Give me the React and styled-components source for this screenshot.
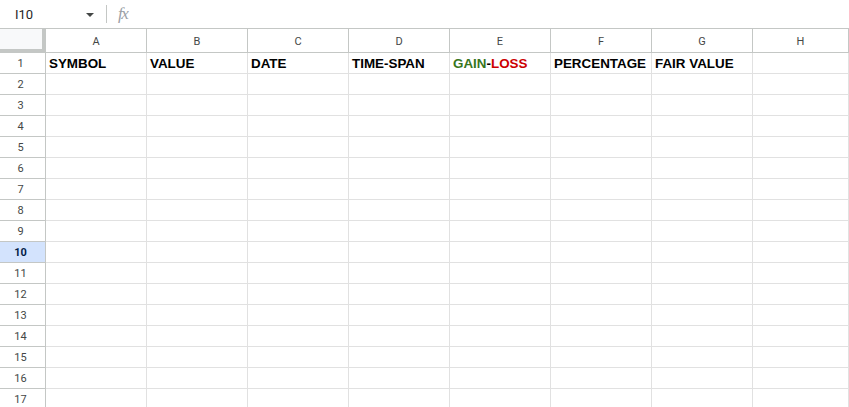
import React from 'react';
import styled, { createGlobalStyle } from "styled-components"

const Global = createGlobalStyle`
  html, body {
    margin: 0;
    padding: 0;
    background: #ffffff;
    overflow: hidden;
  }
  body {
    font-family: Roboto, "Liberation Sans", Arial, sans-serif;
  }
`

const Page = styled.div`
  width: 849px;
  height: 407px;
  overflow: hidden;
  background: #ffffff;
`

const FormulaBar = styled.div`
  display: flex;
  align-items: center;
  height: 28px;
  border-bottom: 1px solid #c4c7c5;
`

const NameBox = styled.div`
  box-sizing: border-box;
  display: flex;
  align-items: center;
  justify-content: space-between;
  width: 95px;
  padding-left: 15px;
  padding-right: 1px;
  font-size: 13px;
  color: #1f1f1f;
  font-family: Roboto, "Liberation Sans", sans-serif;
`

const Caret = styled.span`
  width: 0;
  height: 0;
  border-left: 4px solid transparent;
  border-right: 4px solid transparent;
  border-top: 4px solid #444746;
  margin-top: 1px;
`

const Divider = styled.div`
  width: 1px;
  height: 18px;
  background: #c4c7c5;
  margin-left: 11px;
  margin-right: 11px;
`

const Fx = styled.span`
  font-family: "Liberation Serif", serif;
  font-style: italic;
  font-size: 17px;
  color: #9aa0a6;
  letter-spacing: -1.5px;
`

const Grid = styled.div`
  display: grid;
  grid-template-columns: 46px repeat(7, 101px) 1fr;
  grid-template-rows: 24px;
  grid-auto-rows: 21px;
`

const Corner = styled.div`
  box-sizing: border-box;
  background: #f8f9fa;
  border-right: 4px solid #c4c7c5;
  border-bottom: 4px solid #c4c7c5;
`

const ColHead = styled.div`
  box-sizing: border-box;
  display: flex;
  align-items: center;
  justify-content: center;
  font-size: 11px;
  color: #444746;
  border-right: 1px solid #c4c7c5;
  border-bottom: 1px solid #c4c7c5;
  padding-top: 1px;
`

const RowHead = styled.div`
  box-sizing: border-box;
  display: flex;
  align-items: center;
  justify-content: center;
  padding-right: 4px;
  font-size: 11px;
  color: ${p => p.$active ? "#041e49" : "#444746"};
  font-weight: ${p => p.$active ? 700 : 400};
  background: ${p => p.$active ? "#d3e3fd" : "#ffffff"};
  border-right: 1px solid #c4c7c5;
  border-bottom: 1px solid #c4c7c5;
`

const Cell = styled.div`
  box-sizing: border-box;
  display: flex;
  align-items: center;
  padding-left: 3px;
  padding-top: 1px;
  font-family: "Liberation Sans", Arial, sans-serif;
  font-weight: 700;
  font-size: 13.4px;
  color: #000000;
  white-space: nowrap;
  overflow: hidden;
  border-right: 1px solid #e1e1e1;
  border-bottom: 1px solid #e1e1e1;
`

const Gain = styled.span`
  color: #38761d;
`

const Loss = styled.span`
  color: #cc0000;
`

const columns = ["A", "B", "C", "D", "E", "F", "G", "H"];

const headers = [
    "SYMBOL",
    "VALUE",
    "DATE",
    "TIME-SPAN",
    <><Gain>GAIN</Gain>-<Loss>LOSS</Loss></>,
    "PERCENTAGE",
    "FAIR VALUE",
    "",
];

const App = () => {
    const rows = Array.from({length: 17}, (_, i) => i + 1);
    return (
        <Page>
            <Global/>
            <FormulaBar>
                <NameBox>
                    <span>I10</span>
                    <Caret/>
                </NameBox>
                <Divider/>
                <Fx>fx</Fx>
            </FormulaBar>
            <Grid>
                <Corner/>
                {columns.map(c => <ColHead key={c}>{c}</ColHead>)}
                {rows.map(r => (
                    <React.Fragment key={r}>
                        <RowHead $active={r === 10}>{r}</RowHead>
                        {columns.map((c, i) => (
                            <Cell key={c}>{r === 1 ? headers[i] : ""}</Cell>
                        ))}
                    </React.Fragment>
                ))}
            </Grid>
        </Page>
    );
};

export default App;
